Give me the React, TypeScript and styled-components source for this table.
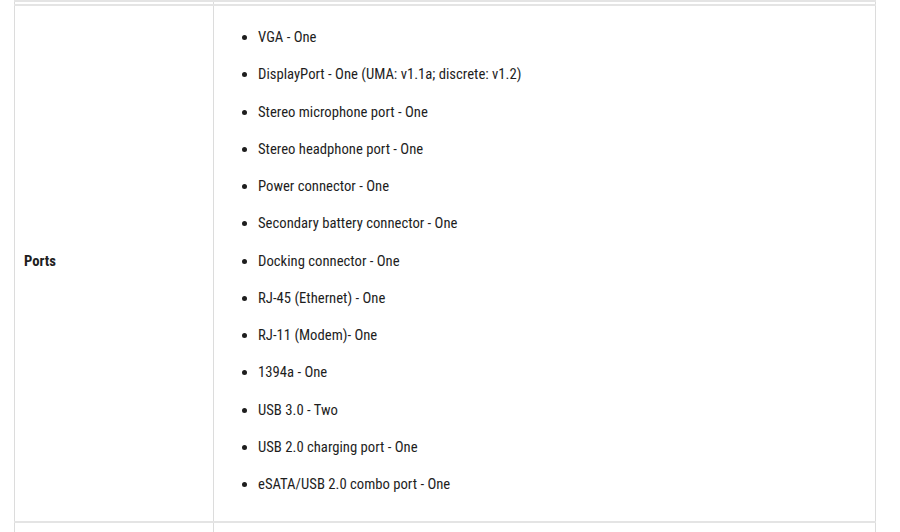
import styled, { createGlobalStyle } from "styled-components";

const GlobalStyle = createGlobalStyle`
  body {
    margin: 0;
    background: #ffffff;
    font-family: "Liberation Sans Narrow", "Roboto Condensed", "DejaVu Sans Condensed", sans-serif;
    color: #1e1e1e;
  }
`;

const ports: string[] = [
  "VGA - One",
  "DisplayPort - One (UMA: v1.1a; discrete: v1.2)",
  "Stereo microphone port - One",
  "Stereo headphone port - One",
  "Power connector - One",
  "Secondary battery connector - One",
  "Docking connector - One",
  "RJ-45 (Ethernet) - One",
  "RJ-11 (Modem)- One",
  "1394a - One",
  "USB 3.0 - Two",
  "USB 2.0 charging port - One",
  "eSATA/USB 2.0 combo port - One",
];

const Page = styled.div`
  padding: 0 24px 0 14px;
  height: 532px;
  overflow: hidden;
`;

const Table = styled.table`
  width: 862px;
  border-collapse: collapse;
  font-size: 14.7px;
`;

const Cell = styled.td<{ $label?: boolean; $h?: number }>`
  border: 1px solid #dcdcdc;
  border-top: 2px solid #e4e4e4;
  padding: 0 0 0 9px;
  vertical-align: middle;
  width: ${(p) => (p.$label ? "189px" : "auto")};
  height: ${(p) => (p.$h ? `${p.$h}px` : "auto")};
`;

const Label = styled(Cell)`
  font-weight: 700;
  padding-bottom: 6px;
`;

const List = styled.ul`
  margin: 0;
  padding: 20px 0 26px 35px;
  list-style: disc;
`;

const Item = styled.li`
  line-height: 22px;
  margin-bottom: 15.25px;
  &:last-child {
    margin-bottom: 0;
  }
`;

export default function App() {
  return (
    <>
      <GlobalStyle />
      <Page>
        <Table>
          <tbody>
            <tr>
              <Cell $label $h={2} />
              <Cell $h={2} />
            </tr>
            <tr>
              <Label $label>Ports</Label>
              <Cell>
                <List>
                  {ports.map((p) => (
                    <Item key={p}>{p}</Item>
                  ))}
                </List>
              </Cell>
            </tr>
            <tr>
              <Cell $label $h={30} />
              <Cell $h={30} />
            </tr>
          </tbody>
        </Table>
      </Page>
    </>
  );
}
